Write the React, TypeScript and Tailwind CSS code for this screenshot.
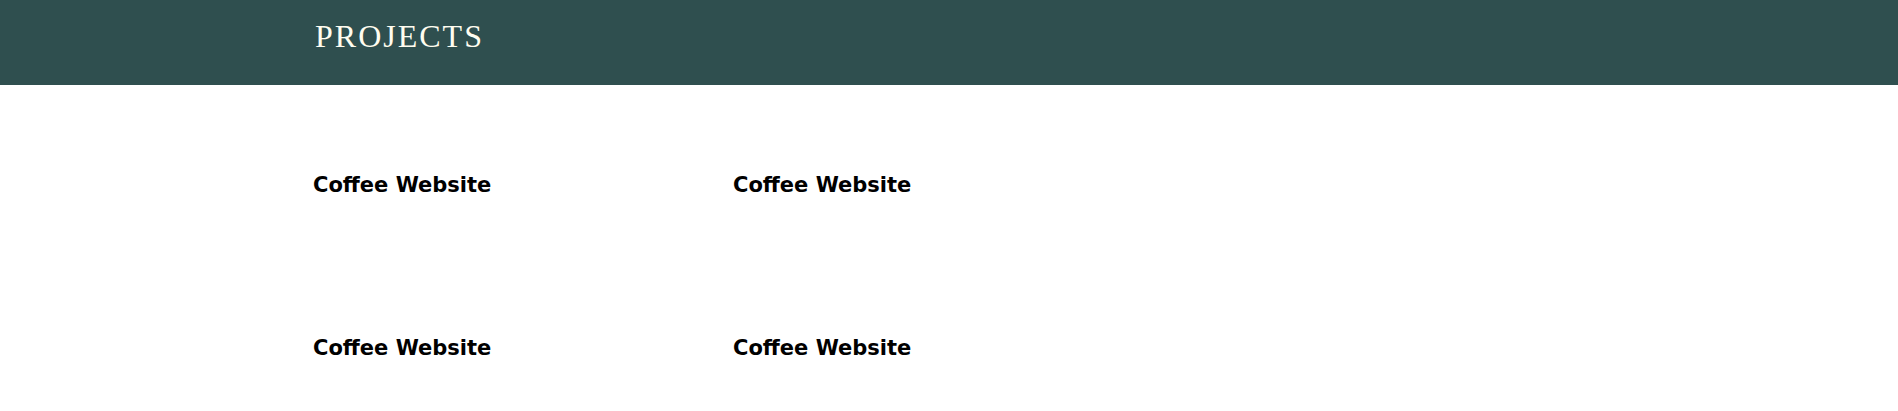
export default function App() {
  const projects = ["Coffee Website", "Coffee Website", "Coffee Website", "Coffee Website"];
  return (
    <main className="min-h-screen bg-white">
      {/* header */}
      <header className="h-[85px] bg-[#2f4f4f] pl-[315px] pt-[18px]">
        <h1 className="text-[#fffdf0] text-[32px] leading-[36px] tracking-[2px] font-['Liberation_Serif','Times_New_Roman',serif] font-normal">
          PROJECTS
        </h1>
      </header>
      {/* projects */}
      <section className="pl-[313px] pt-[88px] grid grid-cols-[420px_420px] gap-y-[138px]">
        {projects.map((p, i) => (
          <div key={i} className="h-[25px] flex items-center">
            <h3 className="text-[21px] leading-[25px] font-bold text-black font-['DejaVu_Sans',sans-serif]">
              {p}
            </h3>
          </div>
        ))}
      </section>
    </main>
  );
}
